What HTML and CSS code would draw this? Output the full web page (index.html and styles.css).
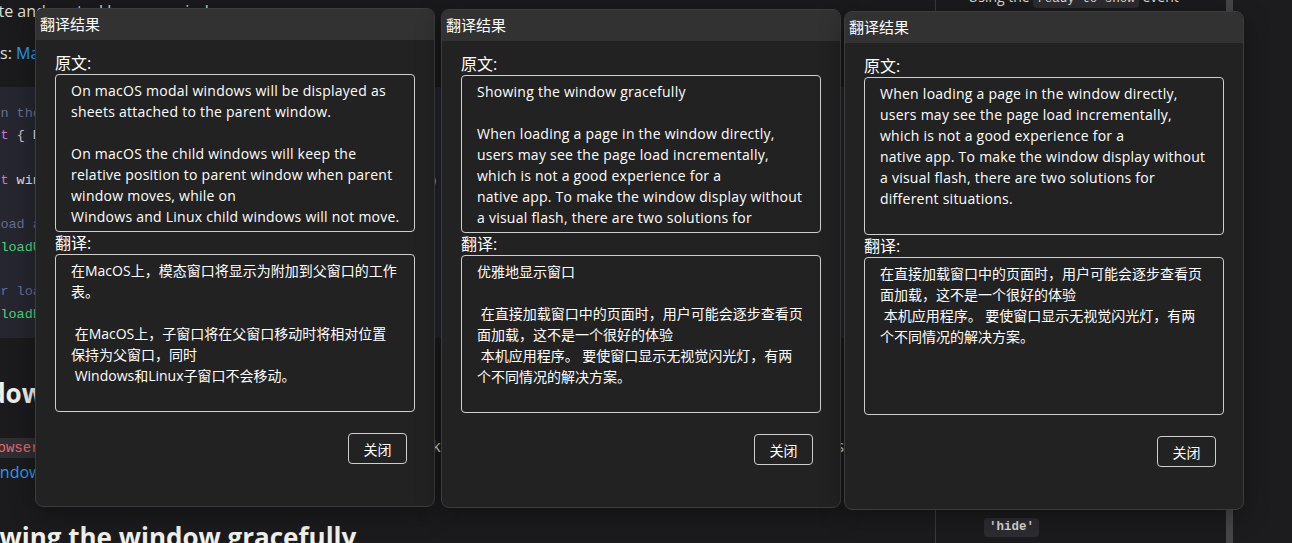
FILE: index.html
```html
<!DOCTYPE html>
<html lang="zh-CN">
<head>
<meta charset="utf-8">
<title>翻译结果</title>
<link rel="stylesheet" href="styles.css">
</head>
<body>
<div class="page">
  <main class="doc">
    <div class="doc-inner">
      <p class="lead">Create and control browser windows.</p>
      <p class="process">Process: <a class="link">Main</a></p>
      <pre class="code"><span class="c-com">// In the main process.</span>
<span class="c-kw">const</span> <span class="c-p">{</span> BrowserWindow <span class="c-p">}</span> = <span class="c-fn">require</span><span class="c-p">(</span><span class="c-str">'electron'</span><span class="c-p">)</span>

<span class="c-kw">const</span> win = <span class="c-kw">new</span> <span class="c-fn">BrowserWindow</span><span class="c-p">({</span> width: <span class="c-num">800</span>, height: <span class="c-num">600</span> <span class="c-p">})</span>

<span class="c-com">// Load a remote URL</span>
win.<span class="c-fn">loadURL</span><span class="c-p">(</span><span class="c-str">'https://github.com'</span><span class="c-p">)</span>

<span class="c-com">// Or load a local HTML file</span>
win.<span class="c-fn">loadFile</span><span class="c-p">(</span><span class="c-str">'index.html'</span><span class="c-p">)</span></pre>
      <h2 class="h-custom">Window customization</h2>
      <p class="para">The <code class="icode">BrowserWindow</code> class exposes various ways to modify the look and behavior of your app's windows. For more details, see the<br><a class="link">Window Customization</a> tutorial.</p>
      <h2 class="h-show">Showing the window gracefully</h2>
    </div>
  </main>
  <aside class="toc">
    <div class="toc-item">Using the <code class="tcode">ready-to-show</code> event</div>
    <div class="toc-item toc-sub"><code class="tcode hide">'hide'</code></div>
  </aside>
  <div class="scrollbar"></div>
  <div class="gutter"></div>
</div>

<section class="dialog d1">
  <header class="dlg-title">翻译结果</header>
  <div class="dlg-body">
    <div class="dlg-label">原文:</div>
    <div class="dlg-box en">On macOS modal windows will be displayed as
sheets attached to the parent window.

On macOS the child windows will keep the
relative position to parent window when parent
window moves, while on
Windows and Linux child windows will not move.</div>
    <div class="dlg-label">翻译:</div>
    <div class="dlg-box">在MacOS上，模态窗口将显示为附加到父窗口的工作
表。

 在MacOS上，子窗口将在父窗口移动时将相对位置
保持为父窗口，同时
 Windows和Linux子窗口不会移动。</div>
    <div class="dlg-actions"><button class="dlg-btn">关闭</button></div>
  </div>
</section>

<section class="dialog d2">
  <header class="dlg-title">翻译结果</header>
  <div class="dlg-body">
    <div class="dlg-label">原文:</div>
    <div class="dlg-box en">Showing the window gracefully

When loading a page in the window directly,
users may see the page load incrementally,
which is not a good experience for a
native app. To make the window display without
a visual flash, there are two solutions for
different situations.</div>
    <div class="dlg-label">翻译:</div>
    <div class="dlg-box">优雅地显示窗口

 在直接加载窗口中的页面时，用户可能会逐步查看页
面加载，这不是一个很好的体验
 本机应用程序。 要使窗口显示无视觉闪光灯，有两
个不同情况的解决方案。</div>
    <div class="dlg-actions"><button class="dlg-btn">关闭</button></div>
  </div>
</section>

<section class="dialog d3">
  <header class="dlg-title">翻译结果</header>
  <div class="dlg-body">
    <div class="dlg-label">原文:</div>
    <div class="dlg-box en">When loading a page in the window directly,
users may see the page load incrementally,
which is not a good experience for a
native app. To make the window display without
a visual flash, there are two solutions for
different situations.</div>
    <div class="dlg-label">翻译:</div>
    <div class="dlg-box">在直接加载窗口中的页面时，用户可能会逐步查看页
面加载，这不是一个很好的体验
 本机应用程序。 要使窗口显示无视觉闪光灯，有两
个不同情况的解决方案。</div>
    <div class="dlg-actions"><button class="dlg-btn">关闭</button></div>
  </div>
</section>
</body>
</html>
```
FILE: styles.css
```css
* { box-sizing: border-box; }

html, body {
  margin: 0;
  padding: 0;
  width: 1292px;
  height: 543px;
  overflow: hidden;
  background: #1b1b1d;
}

body {
  position: relative;
  font-family: "Open Sans", "Noto Sans CJK SC", sans-serif;
  color: #dfdfd6;
}

.page {
  display: flex;
  height: 543px;
  overflow: hidden;
}

/* ---------- documentation page behind the dialogs ---------- */
.doc {
  flex: 0 0 935px;
  overflow: hidden;
}

.doc-inner {
  margin-left: -36px;
  padding-right: 30px;
}

.lead {
  margin: 0;
  font-size: 16px;
  line-height: 22px;
  white-space: nowrap;
}

.process {
  margin: 20px 0 0;
  font-size: 16px;
  line-height: 22px;
  text-indent: -14px;
}

.link {
  color: #2d9cf0;
  text-decoration: none;
}

.code {
  margin: 23px 0 0;
  padding: 16px 0 12px 4px;
  background: #25262f;
  font-family: "Liberation Mono", monospace;
  font-size: 13.5px;
  line-height: 22.3px;
  color: #e1e4e8;
  white-space: pre;
  overflow: hidden;
}

.c-com { color: #646d96; }
.c-kw { color: #c678dd; }
.c-fn { color: #48d47a; }
.c-str { color: #e3b778; }
.c-num { color: #f08d49; }
.c-p { color: #c8c8d0; }

.h-custom,
.h-show {
  margin: 0;
  font-size: 26px;
  line-height: 32px;
  font-weight: 700;
  color: #f0f0ea;
  white-space: nowrap;
}

.h-custom {
  margin-top: 39px;
  text-indent: -25px;
}

.para {
  margin: 25px 0 0;
  padding-left: 17px;
  text-indent: -38px;
  font-size: 16px;
  line-height: 24.5px;
  white-space: nowrap;
}

.icode {
  font-family: "Liberation Mono", monospace;
  font-size: 14px;
  color: #e8686f;
  background: #2e2e33;
  border-radius: 4px;
  padding: 2px 6px;
}

.h-show {
  margin-top: 36px;
  text-indent: -12px;
}

/* ---------- outline aside ---------- */
.toc {
  flex: 0 0 291px;
  border-left: 1px solid #3a3a3c;
  padding: 0 0 6px 32px;
  display: flex;
  flex-direction: column;
  font-size: 14px;
  line-height: 20px;
  color: #dcdcd2;
}

.toc-item {
  margin-top: -13px;
  white-space: nowrap;
}

.toc-sub {
  margin-top: auto;
  padding-left: 16px;
}

.tcode {
  font-family: "Liberation Mono", monospace;
  font-size: 12.5px;
  background: #2c2c31;
  border-radius: 4px;
  padding: 2px 4px;
}

.tcode.hide {
  display: inline-block;
  line-height: 19px;
  padding: 0 5px;
  font-weight: 700;
  color: #d8d8d8;
}

.scrollbar {
  flex: 0 0 7px;
  background: #464646;
}

.gutter {
  flex: 1 1 auto;
  background: #1c1c1e;
}

/* ---------- translation dialogs (windows on the desktop) ---------- */
.dialog {
  position: absolute;
  width: 400px;
  background: #222222;
  border: 1px solid #3c3c3c;
  border-radius: 8px;
  overflow: hidden;
  box-shadow: 0 6px 24px rgba(0, 0, 0, 0.35);
  font-family: "Open Sans", "Noto Sans CJK SC", sans-serif;
  color: #ffffff;
}

.d1 { left: 35px; top: 8px; }
.d2 { left: 441px; top: 9px; }
.d3 { left: 844px; top: 11px; }

.dlg-title {
  height: 31px;
  line-height: 31px;
  padding-left: 4px;
  background: #323232;
  font-size: 15px;
}

.dlg-body {
  padding: 12px 19px 42px;
}

.dlg-label {
  font-size: 16px;
  line-height: 22px;
}

.dlg-box {
  height: 158px;
  border: 1px solid #cfcfcf;
  border-radius: 4px;
  padding: 5px 8px 0 15px;
  font-size: 14px;
  line-height: 21px;
  white-space: pre;
  overflow: hidden;
}

.dlg-box.en {
  letter-spacing: 0.25px;
}

.dlg-actions {
  display: flex;
  justify-content: flex-end;
  margin-top: 21px;
  padding-right: 8px;
}

.dlg-btn {
  width: 59px;
  height: 31px;
  border: 1px solid #cfcfcf;
  border-radius: 4px;
  background: transparent;
  color: #ffffff;
  font-family: "Open Sans", "Noto Sans CJK SC", sans-serif;
  font-size: 14px;
  padding: 0;
}
```
